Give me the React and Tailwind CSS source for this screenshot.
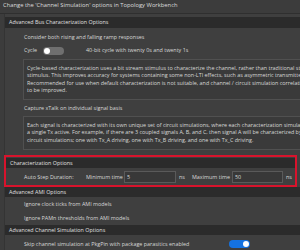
import React from "react";

const font = { fontFamily: '"Open Sans", "Noto Sans", sans-serif' };

function Band({ children, className = "h-[10px]" }) {
  return (
    <div className={"bg-[#2b2b2b] flex items-center pl-[4px] text-[5.4px] text-[#e0e0e0] whitespace-nowrap " + className}>
      {children}
    </div>
  );
}

function Item({ children, className = "h-[14px]" }) {
  return (
    <div className={"flex items-center pl-[19px] text-[5.4px] text-[#d8d8d8] whitespace-nowrap " + className}>
      {children}
    </div>
  );
}

function Toggle({ on }) {
  return (
    <div
      className={
        "w-[21px] h-[8px] rounded-full flex items-center px-[1px] shrink-0 " +
        (on ? "bg-[#1572e0] justify-end" : "bg-[#6f6f6f] justify-start")
      }
    >
      <div className="w-[6px] h-[6px] rounded-full bg-white" />
    </div>
  );
}

function DescBox({ lines, className = "" }) {
  return (
    <div className={"ml-[18px] w-[320px] border border-[#505050] bg-[#3a3a3a] px-[3px] py-[5px] text-[5.4px] leading-[7.3px] text-[#d8d8d8] " + className}>
      {lines.map((l, i) => (
        <div key={i} className="whitespace-nowrap">{l}</div>
      ))}
    </div>
  );
}

export default function App() {
  return (
    <div className="w-[300px] h-[250px] overflow-hidden bg-[#3c3c3c]" style={font}>
      <div className="h-[11px] flex items-center pl-[3px] text-[5.8px] text-[#dcdcdc] whitespace-nowrap">
        Change the 'Channel Simulation' options in Topology Workbench
      </div>
      <div className="h-[2px]" />
      <div className="h-[1px] bg-[#2f2f2f]" />
      <div className="ml-[4px] pt-[3px] border-l border-[#343434] bg-[#3f3f3f] h-[236px]">
        <Band className="h-[11px]">Advanced Bus Characterization Options</Band>
        <div className="h-[2px]" />
        <Item>Consider both rising and falling ramp responses</Item>
        <Item className="h-[13px]">
          <span className="w-[19px] shrink-0">Cycle</span>
          <Toggle on={false} />
          <span className="ml-[22px]">40-bit cycle with twenty 0s and twenty 1s</span>
        </Item>
        <div className="h-[2px]" />
        <DescBox
          lines={[
            "Cycle-based characterization uses a bit stream stimulus to characterize the channel, rather than traditional step",
            "stimulus. This improves accuracy for systems containing some non-LTI effects, such as asymmetric transmitter",
            "Recommended for use when default characterization is not suitable, and channel / circuit simulation correlation",
            "to be improved.",
          ]}
        />
        <div className="h-[1px]" />
        <Item>Capture xTalk on individual signal basis</Item>
        <div className="h-[1px]" />
        <DescBox
          lines={[
            "Each signal is characterized with its own unique set of circuit simulations, where each characterization simulation",
            "a single Tx active. For example, if there are 3 coupled signals A, B, and C, then signal A will be characterized by",
            "circuit simulations; one with Tx_A driving, one with Tx_B driving, and one with Tx_C driving.",
          ]}
        />
        <div className="h-[5px]" />
        <div className="w-[293px] -ml-[1px] border-2 border-[#d8132c] pt-[1px]">
          <Band>Characterization Options</Band>
          <div className="h-[17px] flex items-center pl-[18px] text-[5.4px] text-[#d8d8d8] whitespace-nowrap">
            <span className="w-[62px] shrink-0">Auto Step Duration:</span>
            <span className="w-[38px] shrink-0">Minimum time</span>
            <div className="w-[52px] h-[12px] shrink-0 border border-[#5a5a5a] bg-[#383838] flex items-center pl-[2px]">5</div>
            <span className="ml-[3px] w-[13px] shrink-0">ns</span>
            <span className="w-[40px] shrink-0">Maximum time</span>
            <div className="w-[51px] h-[12px] shrink-0 border border-[#5a5a5a] bg-[#383838] flex items-center pl-[2px]">50</div>
            <span className="ml-[3px]">ns</span>
          </div>
        </div>
        <Band>Advanced AMI Options</Band>
        <Item>Ignore clock ticks from AMI models</Item>
        <Item>Ignore PAMn thresholds from AMI models</Item>
        <Band>Advanced Channel Simulation Options</Band>
        <div className="h-[2px]" />
        <Item>
          <span className="w-[205px] shrink-0">Skip channel simulation at PkgPin with package parasitics enabled</span>
          <Toggle on={true} />
        </Item>
      </div>
    </div>
  );
}
